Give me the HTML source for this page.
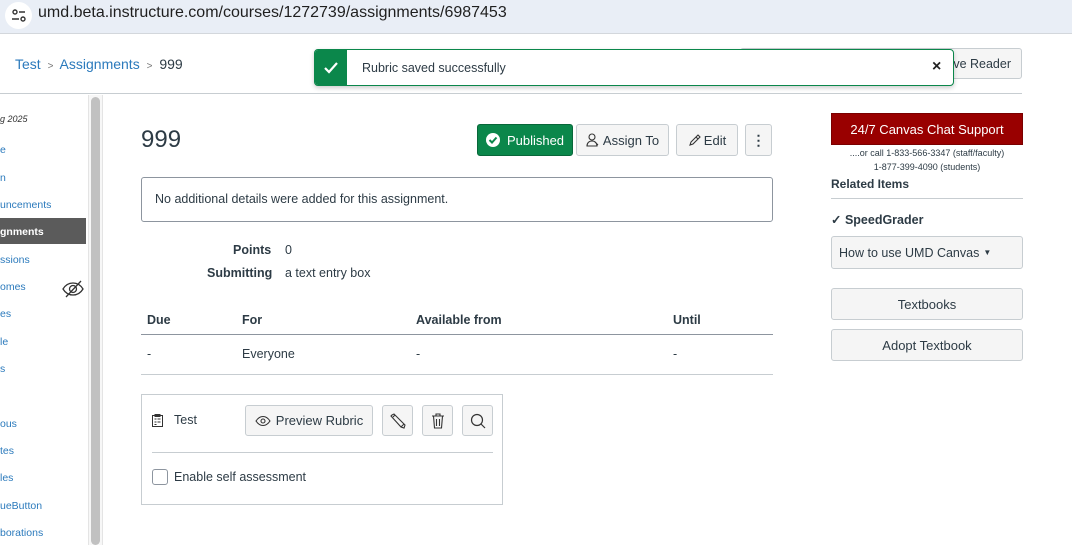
<!DOCTYPE html>
<html><head><meta charset="utf-8"><style>
*{box-sizing:border-box;margin:0;padding:0}
body{width:1072px;height:545px;overflow:hidden;background:#fff;font-family:"Liberation Sans",Arial,sans-serif;color:#2d3b45;position:relative}
.a{position:absolute}
.bar{left:0;top:0;width:1072px;height:34px;background:#e9eef6;border-bottom:1px solid #d3d7dc}
.url{left:38px;top:4px;font-size:16px;color:#1f1f1f}
.pill{left:5px;top:2px;width:27px;height:27px;border-radius:50%;background:#fff}
.bc{top:56px;font-size:14px}
.lnk{color:#2b7abc}
.side{left:0;font-size:10.5px;color:#2b7abc}
.btn{background:#f5f5f5;border:1px solid #c7cdd1;border-radius:3px;font-size:13px;color:#2d3b45;display:flex;align-items:center;justify-content:center}
.th{font-size:12.5px;font-weight:bold;color:#2d3b45}
.td{font-size:12.5px;color:#2d3b45}
</style></head><body>
<div class="a bar"></div>
<div class="a pill"></div>
<svg class="a" style="left:11px;top:8px" width="16" height="16" viewBox="0 0 16 16" fill="none" stroke="#333" stroke-width="1.4"><circle cx="4" cy="4" r="2"/><path d="M8 4h6M1 11h7"/><circle cx="12" cy="11" r="2"/></svg>
<div class="a url">umd.beta.instructure.com/courses/1272739/assignments/6987453</div>

<div class="a bc" style="left:15px"><span class="lnk">Test</span> <span style="color:#777;font-size:10px;margin:0 3px">&gt;</span> <span class="lnk">Assignments</span> <span style="color:#777;font-size:10px;margin:0 3px">&gt;</span> 999</div>
<div class="a" style="left:0;top:93px;width:1022px;height:1px;background:#c7cdd1"></div>
<div class="a btn" style="left:740px;top:48px;width:282px;height:31px;justify-content:flex-end;padding-right:10px;font-size:12.5px">ive Reader</div>

<div class="a" style="left:314px;top:49px;width:640px;height:37px;border:1px solid #0b874b;border-radius:4px;background:#fff;box-shadow:0 2px 5px rgba(0,0,0,.2);overflow:hidden">
<div class="a" style="left:0;top:0;width:32px;height:37px;background:#0b874b"></div>
<svg class="a" style="left:8px;top:11px" width="16" height="14" viewBox="0 0 16 14"><path d="M2 7l4 4 8-9" stroke="#fff" stroke-width="2.2" fill="none"/></svg>
<div class="a" style="left:47px;top:11px;font-size:12.5px;color:#2d3b45">Rubric saved successfully</div>
<div class="a" style="left:617px;top:8px;font-size:16px;font-weight:bold;color:#222">×</div>
</div>

<div class="a side" style="top:114px;font-size:9px;font-style:italic;color:#333">g 2025</div>
<div class="a side" style="top:144px">e</div>
<div class="a side" style="top:172px">n</div>
<div class="a side" style="top:199px">uncements</div>
<div class="a" style="left:0;top:218px;width:86px;height:26px;background:#5b5b5b"></div>
<div class="a side" style="top:226px;color:#fff;font-weight:bold">gnments</div>
<div class="a side" style="top:254px">ssions</div>
<div class="a side" style="top:281px">omes</div>
<svg class="a" style="left:62px;top:280px" width="22" height="18" viewBox="0 0 22 18" fill="none" stroke="#333" stroke-width="1.3"><path d="M1 9c3-5 7-6 10-6s7 1 10 6c-3 5-7 6-10 6S4 14 1 9z"/><circle cx="11" cy="9" r="3.5"/><path d="M4 17L19 1"/></svg>
<div class="a side" style="top:308px">es</div>
<div class="a side" style="top:336px">le</div>
<div class="a side" style="top:363px">s</div>
<div class="a side" style="top:418px">ous</div>
<div class="a side" style="top:445px">tes</div>
<div class="a side" style="top:472px">les</div>
<div class="a side" style="top:500px">ueButton</div>
<div class="a side" style="top:527px">borations</div>
<div class="a" style="left:88px;top:95px;width:15px;height:450px;background:#f7f7f7;border-left:1px solid #e4e4e4;border-right:1px solid #e4e4e4"></div>
<div class="a" style="left:91px;top:97px;width:9px;height:448px;background:#c1c1c1;border-radius:5px"></div>

<div class="a" style="left:141px;top:126px;font-size:24px;color:#2d3b45">999</div>
<div class="a btn" style="left:477px;top:124px;width:96px;height:32px;background:#0b874b;border-color:#08673a;color:#fff"><svg width="14" height="14" viewBox="0 0 14 14" style="margin-right:7px"><circle cx="7" cy="7" r="7" fill="#fff"/><path d="M3.5 7l2.5 2.5 4.5-5" stroke="#0b874b" stroke-width="2" fill="none"/></svg>Published</div>
<div class="a btn" style="left:576px;top:124px;width:93px;height:32px"><svg width="14" height="14" viewBox="0 0 14 14" fill="none" stroke="#333" stroke-width="1.1" style="margin-right:3px"><circle cx="6" cy="4" r="3"/><path d="M1 13c0-3 2-5 5-5s5 2 5 5zM9 9l3 3"/></svg>Assign To</div>
<div class="a btn" style="left:676px;top:124px;width:62px;height:32px"><svg width="13" height="13" viewBox="0 0 13 13" fill="none" stroke="#333" stroke-width="1.1" style="margin-right:3px"><path d="M2 11l1-3 7-7 2 2-7 7zM8 3l2 2"/></svg>Edit</div>
<div class="a btn" style="left:745px;top:124px;width:27px;height:32px;font-weight:bold;font-size:14px">⋮</div>

<div class="a" style="left:141px;top:177px;width:632px;height:45px;border:1px solid #8d959f;border-radius:3px"></div>
<div class="a td" style="left:155px;top:192px">No additional details were added for this assignment.</div>

<div class="a th" style="left:233px;top:243px">Points</div>
<div class="a td" style="left:285px;top:243px">0</div>
<div class="a th" style="left:207px;top:266px">Submitting</div>
<div class="a td" style="left:285px;top:266px">a text entry box</div>

<div class="a th" style="left:147px;top:313px">Due</div>
<div class="a th" style="left:242px;top:313px">For</div>
<div class="a th" style="left:416px;top:313px">Available from</div>
<div class="a th" style="left:673px;top:313px">Until</div>
<div class="a" style="left:141px;top:334px;width:632px;height:1px;background:#8d959f"></div>
<div class="a td" style="left:147px;top:347px">-</div>
<div class="a td" style="left:242px;top:347px">Everyone</div>
<div class="a td" style="left:416px;top:347px">-</div>
<div class="a td" style="left:673px;top:347px">-</div>
<div class="a" style="left:141px;top:374px;width:632px;height:1px;background:#c7cdd1"></div>

<div class="a" style="left:141px;top:394px;width:362px;height:111px;border:1px solid #c7cdd1"></div>
<svg class="a" style="left:152px;top:414px" width="11" height="13" viewBox="0 0 11 13" fill="none" stroke="#333" stroke-width="1"><rect x=".5" y="1.5" width="10" height="11"/><path d="M3 .5h5v2H3zM2.5 5h2M5.5 5h3M2.5 8h2M5.5 8h3M2.5 10.5h2"/></svg>
<div class="a td" style="left:174px;top:413px">Test</div>
<div class="a btn" style="left:245px;top:405px;width:128px;height:31px"><svg width="16" height="12" viewBox="0 0 16 12" fill="none" stroke="#333" stroke-width="1.1" style="margin-right:5px"><path d="M1 6c2-3 4.5-4.5 7-4.5S13 3 15 6c-2 3-4.5 4.5-7 4.5S3 9 1 6z"/><circle cx="8" cy="6" r="2"/></svg>Preview Rubric</div>
<div class="a btn" style="left:382px;top:405px;width:31px;height:31px"><svg width="16" height="16" viewBox="0 0 16 16" fill="none" stroke="#333" stroke-width="1.1"><path d="M2 2l2-1 11 11-1 3-3-1L1 3zM3 4l2-2M11 14l3-3"/></svg></div>
<div class="a btn" style="left:422px;top:405px;width:31px;height:31px"><svg width="14" height="16" viewBox="0 0 14 16" fill="none" stroke="#333" stroke-width="1.1"><path d="M1 3h12M5 3V1h4v2M2.5 3l1 12h7l1-12M5.5 6v7M8.5 6v7"/></svg></div>
<div class="a btn" style="left:462px;top:405px;width:31px;height:31px"><svg width="16" height="16" viewBox="0 0 16 16" fill="none" stroke="#333" stroke-width="1.2"><circle cx="7" cy="7" r="5.5"/><path d="M11 11l4 4"/></svg></div>
<div class="a" style="left:152px;top:452px;width:341px;height:1px;background:#c7cdd1"></div>
<div class="a" style="left:152px;top:469px;width:16px;height:16px;border:1px solid #8d959f;border-radius:3px"></div>
<div class="a td" style="left:174px;top:470px">Enable self assessment</div>

<div class="a" style="left:831px;top:113px;width:192px;height:32px;background:#990000;border:1px solid #7a0000;color:#fff;font-size:13px;display:flex;align-items:center;justify-content:center">24/7 Canvas Chat Support</div>
<div class="a" style="left:831px;top:146px;width:192px;text-align:center;font-size:9px;color:#2d3b45;line-height:14px">....or call 1-833-566-3347 (staff/faculty)<br>1-877-399-4090 (students)</div>
<div class="a" style="left:831px;top:177px;font-size:12px;font-weight:bold;color:#2d3b45">Related Items</div>
<div class="a" style="left:831px;top:198px;width:192px;height:1px;background:#c7cdd1"></div>
<div class="a" style="left:831px;top:212px;font-size:12.5px;font-weight:bold;color:#2d3b45">✓ SpeedGrader</div>
<div class="a btn" style="left:831px;top:236px;width:192px;height:33px;justify-content:flex-start;padding-left:7px;font-size:12.5px">How to use UMD Canvas <span style="font-size:8px;margin-left:4px">▼</span></div>
<div class="a btn" style="left:831px;top:288px;width:192px;height:32px">Textbooks</div>
<div class="a btn" style="left:831px;top:329px;width:192px;height:32px">Adopt Textbook</div>
</body></html>
